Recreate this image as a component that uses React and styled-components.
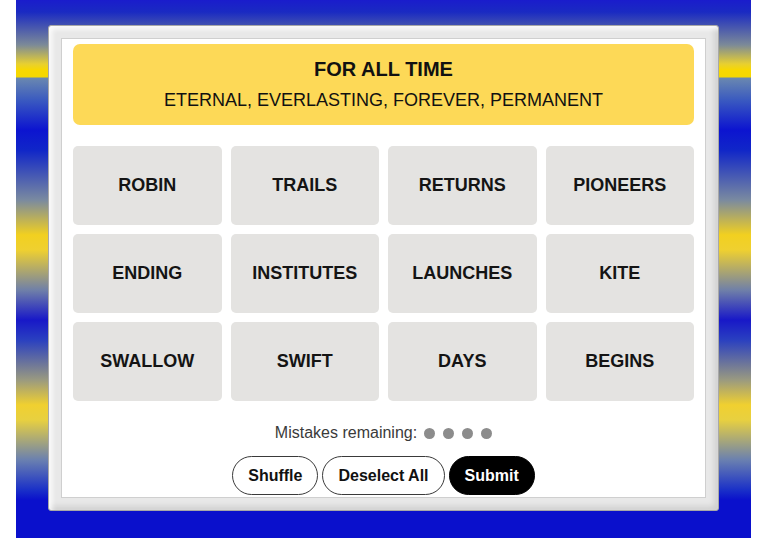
import styled, { createGlobalStyle } from "styled-components";

const GlobalStyle = createGlobalStyle`
  html, body {
    margin: 0;
    padding: 0;
    background: #ffffff;
    font-family: "Liberation Sans", Arial, sans-serif;
  }
`;

const Page = styled.div`
  width: 735px;
  height: 538px;
  margin-left: 16px;
  padding-top: 25px;
  box-sizing: border-box;
  background: linear-gradient(
    to bottom,
    #1a1ccc 0px,
    #1a2ac2 12px,
    #7c8a98 45px,
    #e8d030 64px,
    #f8d800 70px,
    #f5d800 77px,
    #6a88b0 78px,
    #3a5ac0 100px,
    #0c14d0 130px,
    #1026c8 150px,
    #7a8aa0 200px,
    #f2d020 235px,
    #efd030 250px,
    #7080a8 290px,
    #1818c8 320px,
    #2a40c0 340px,
    #9a9a80 380px,
    #f0d030 405px,
    #e8d040 420px,
    #6a80b0 460px,
    #1a30c8 490px,
    #0a10cc 500px,
    #0a10cc 538px
  );
`;

const Frame = styled.div`
  width: 671px;
  margin-left: 32px;
  box-sizing: border-box;
  padding: 12px;
  border: 1px solid #a8a8a8;
  border-radius: 3px;
  background: #e8e8e8;
  box-shadow: inset 3px 3px 5px rgba(255, 255, 255, 0.9),
    inset -3px -3px 6px rgba(0, 0, 0, 0.12);
`;

const Board = styled.div`
  display: flex;
  flex-direction: column;
  align-items: stretch;
  background: #ffffff;
  border: 1px solid #cfcfcf;
  padding: 5px 11px 2px 11px;
`;

const Banner = styled.div`
  height: 81px;
  border-radius: 7px;
  background: #fdd957;
  display: flex;
  flex-direction: column;
  align-items: center;
  justify-content: center;
  gap: 10px;
  color: #111;
`;

const BannerTitle = styled.div`
  font-size: 20px;
  font-weight: 700;
  line-height: 22px;
  margin-top: -2px;
`;

const BannerWords = styled.div`
  font-size: 18px;
  line-height: 20px;
`;

const Grid = styled.div`
  margin-top: 21px;
  display: grid;
  grid-template-columns: repeat(4, 1fr);
  grid-auto-rows: 79px;
  gap: 9px 9px;
`;

const Tile = styled.div`
  background: #e4e3e1;
  border-radius: 5px;
  display: flex;
  align-items: center;
  justify-content: center;
  font-size: 18px;
  font-weight: 700;
  color: #141414;
`;

const Mistakes = styled.div`
  margin-top: 23px;
  height: 18px;
  display: flex;
  align-items: center;
  justify-content: center;
  gap: 7px;
  font-size: 16px;
  color: #3a3a3a;
`;

const Dots = styled.div`
  display: flex;
  gap: 8px;
`;

const Dot = styled.span`
  width: 11px;
  height: 11px;
  border-radius: 50%;
  background: #8c8c8c;
`;

const Actions = styled.div`
  margin-top: 14px;
  display: flex;
  justify-content: center;
  gap: 4px;
`;

const Button = styled.button`
  height: 39px;
  padding: 0 15px;
  border-radius: 20px;
  border: 1px solid ${(p) => (p.$primary ? "#000" : "#3a3a3a")};
  background: ${(p) => (p.$primary ? "#000" : "#fff")};
  color: ${(p) => (p.$primary ? "#fff" : "#111")};
  font-family: "Liberation Sans", Arial, sans-serif;
  font-size: 16px;
  font-weight: 700;
  cursor: pointer;
`;

const words = [
  "ROBIN",
  "TRAILS",
  "RETURNS",
  "PIONEERS",
  "ENDING",
  "INSTITUTES",
  "LAUNCHES",
  "KITE",
  "SWALLOW",
  "SWIFT",
  "DAYS",
  "BEGINS",
];

export default function App() {
  return (
    <>
      <GlobalStyle />
      <Page>
        <Frame>
          <Board>
            <Banner>
              <BannerTitle>FOR ALL TIME</BannerTitle>
              <BannerWords>ETERNAL, EVERLASTING, FOREVER, PERMANENT</BannerWords>
            </Banner>
            <Grid>
              {words.map((w) => (
                <Tile key={w}>{w}</Tile>
              ))}
            </Grid>
            <Mistakes>
              Mistakes remaining:
              <Dots>
                {[0, 1, 2, 3].map((i) => (
                  <Dot key={i} />
                ))}
              </Dots>
            </Mistakes>
            <Actions>
              <Button>Shuffle</Button>
              <Button>Deselect All</Button>
              <Button $primary>Submit</Button>
            </Actions>
          </Board>
        </Frame>
      </Page>
    </>
  );
}
